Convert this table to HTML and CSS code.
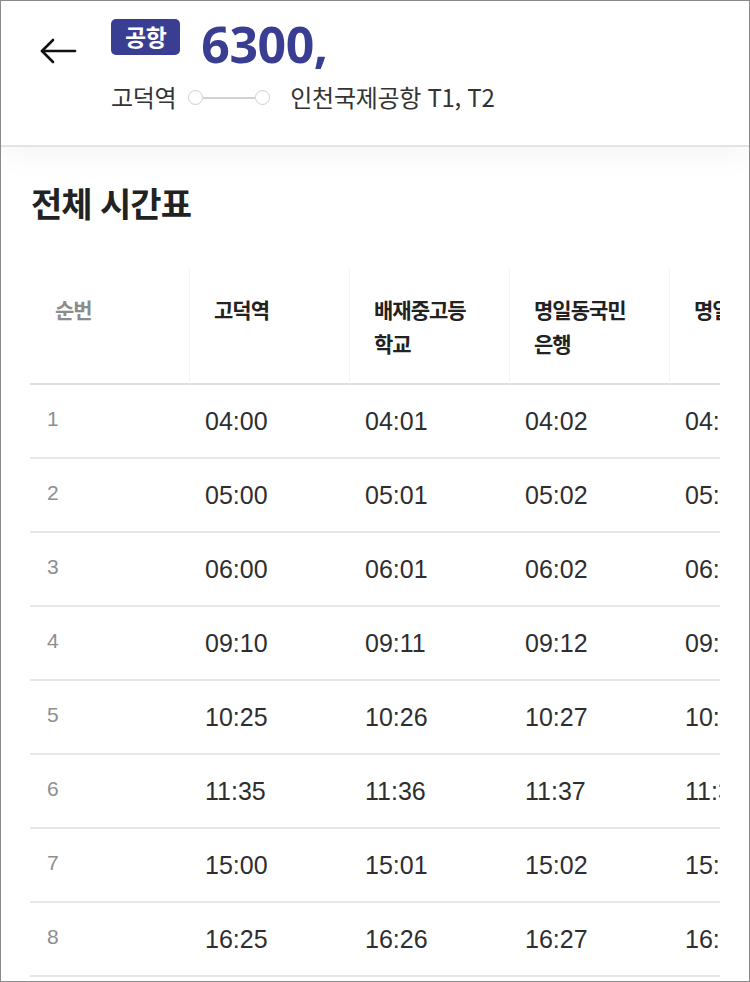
FILE: index.html
```html
<!DOCTYPE html>
<html lang="ko">
<head>
<meta charset="utf-8">
<title>6300 전체 시간표</title>
<link rel="stylesheet" href="styles.css">
</head>
<body>
<div class="frame">
  <header class="top">
    <button class="back" aria-label="뒤로">
      <svg width="38" height="26" viewBox="0 0 38 26" fill="none" stroke="#111" stroke-width="2.6" stroke-linecap="round" stroke-linejoin="round">
        <path d="M36 13H3"/>
        <path d="M14 2L3 13L14 24"/>
      </svg>
    </button>
    <div class="info">
      <div class="title-row">
        <span class="badge">공항</span>
        <span class="number">6300,</span>
      </div>
      <div class="route">
        <span class="stop">고덕역</span>
        <span class="dots"><i class="dot"></i><i class="line"></i><i class="dot"></i></span>
        <span class="stop">인천국제공항 T1, T2</span>
      </div>
    </div>
  </header>
  <main class="content">
    <h1 class="section-title">전체 시간표</h1>
    <div class="table-wrap">
      <table class="timetable">
        <colgroup>
          <col class="c-idx"><col class="c-stop"><col class="c-stop"><col class="c-stop"><col class="c-stop">
        </colgroup>
        <thead>
          <tr>
            <th class="idx">순번</th>
            <th>고덕역</th>
            <th>배재중고등<br>학교</th>
            <th>명일동국민<br>은행</th>
            <th>명일시장</th>
          </tr>
        </thead>
        <tbody>
          <tr><td class="idx">1</td><td>04:00</td><td>04:01</td><td>04:02</td><td>04:03</td></tr>
          <tr><td class="idx">2</td><td>05:00</td><td>05:01</td><td>05:02</td><td>05:03</td></tr>
          <tr><td class="idx">3</td><td>06:00</td><td>06:01</td><td>06:02</td><td>06:03</td></tr>
          <tr><td class="idx">4</td><td>09:10</td><td>09:11</td><td>09:12</td><td>09:13</td></tr>
          <tr><td class="idx">5</td><td>10:25</td><td>10:26</td><td>10:27</td><td>10:28</td></tr>
          <tr><td class="idx">6</td><td>11:35</td><td>11:36</td><td>11:37</td><td>11:38</td></tr>
          <tr><td class="idx">7</td><td>15:00</td><td>15:01</td><td>15:02</td><td>15:03</td></tr>
          <tr><td class="idx">8</td><td>16:25</td><td>16:26</td><td>16:27</td><td>16:28</td></tr>
          <tr><td class="idx">9</td><td>17:40</td><td>17:41</td><td>17:42</td><td>17:43</td></tr>
        </tbody>
      </table>
    </div>
  </main>
</div>
</body>
</html>
```

FILE: styles.css
```css
* { box-sizing: border-box; }

html, body {
  margin: 0;
  padding: 0;
  background: #fff;
}

body {
  font-family: "Noto Sans CJK KR", "Noto Sans", sans-serif;
  color: #222;
}

.frame {
  width: 750px;
  height: 982px;
  border: 1px solid #8a8a8a;
  overflow: hidden;
  background: #fff;
  display: flex;
  flex-direction: column;
}

/* ---------- header ---------- */
.top {
  position: relative;
  z-index: 1;
  display: flex;
  align-items: flex-start;
  height: 146px;
  padding: 18px 0 0 38px;
  background: #fff;
  border-bottom: 2px solid #e3e3e3;
  box-shadow: 0 6px 30px rgba(0, 0, 0, 0.05);
  flex: none;
}

.back {
  display: block;
  width: 38px;
  height: 26px;
  margin-top: 19px;
  padding: 0;
  border: 0;
  background: none;
}

.back svg { display: block; }

.info {
  margin-left: 34px;
  display: flex;
  flex-direction: column;
}

.title-row {
  display: flex;
  align-items: flex-start;
  gap: 21px;
}

.badge {
  height: 36px;
  padding: 0 14px;
  border-radius: 5px;
  background: #3a3e92;
  color: #fff;
  font-size: 23px;
  font-weight: 700;
  line-height: 35px;
  letter-spacing: -0.5px;
}

.number {
  font-family: "Noto Sans", sans-serif;
  font-size: 50px;
  font-weight: 700;
  line-height: 48px;
  color: #3a3e92;
  letter-spacing: -0.5px;
  margin-top: 1px;
}

.route {
  display: flex;
  align-items: center;
  margin-top: 12px;
  height: 32px;
  font-size: 24px;
  color: #333;
  letter-spacing: -0.3px;
}

.dots {
  display: flex;
  align-items: center;
  margin: 3px 20px 0 12px;
}

.dot {
  display: block;
  width: 15px;
  height: 15px;
  border: 1.5px solid #cfcfcf;
  border-radius: 50%;
  background: #fff;
}

.line {
  display: block;
  width: 52px;
  height: 2px;
  background: #d2d2d2;
}

/* ---------- content ---------- */
.content {
  flex: 1;
  padding: 0 0 0 29px;
  background: #fff;
}

.section-title {
  margin: 34px 0 0 1px;
  font-size: 34px;
  font-weight: 700;
  line-height: 44px;
  letter-spacing: -1px;
  color: #222;
}

.table-wrap {
  width: 690px;
  overflow: hidden;
  margin-top: 44px;
}

.timetable {
  table-layout: fixed;
  border-collapse: separate;
  border-spacing: 0;
  width: 799px;
}

.c-idx { width: 159px; }
.c-stop { width: 160px; }

.timetable th {
  height: 116px;
  padding: 23px 6px 23px 24px;
  vertical-align: top;
  text-align: left;
  font-size: 21px;
  font-weight: 700;
  line-height: 34px;
  letter-spacing: -1px;
  color: #222;
  border-left: 1px solid #f3f3f3;
  border-bottom: 2px solid #dedede;
}

.timetable th.idx {
  border-left: 0;
  padding-left: 25px;
  color: #8c8c8c;
}

.timetable td {
  height: 74px;
  padding: 0 0 0 16px;
  vertical-align: middle;
  font-family: "Liberation Sans", Arial, sans-serif;
  font-size: 25px;
  color: #2e2e2e;
  border-bottom: 2px solid #e6e6e6;
}

.timetable td.idx {
  padding-left: 17px;
  padding-bottom: 4px;
  font-size: 21px;
  color: #8e8e8e;
}
```
